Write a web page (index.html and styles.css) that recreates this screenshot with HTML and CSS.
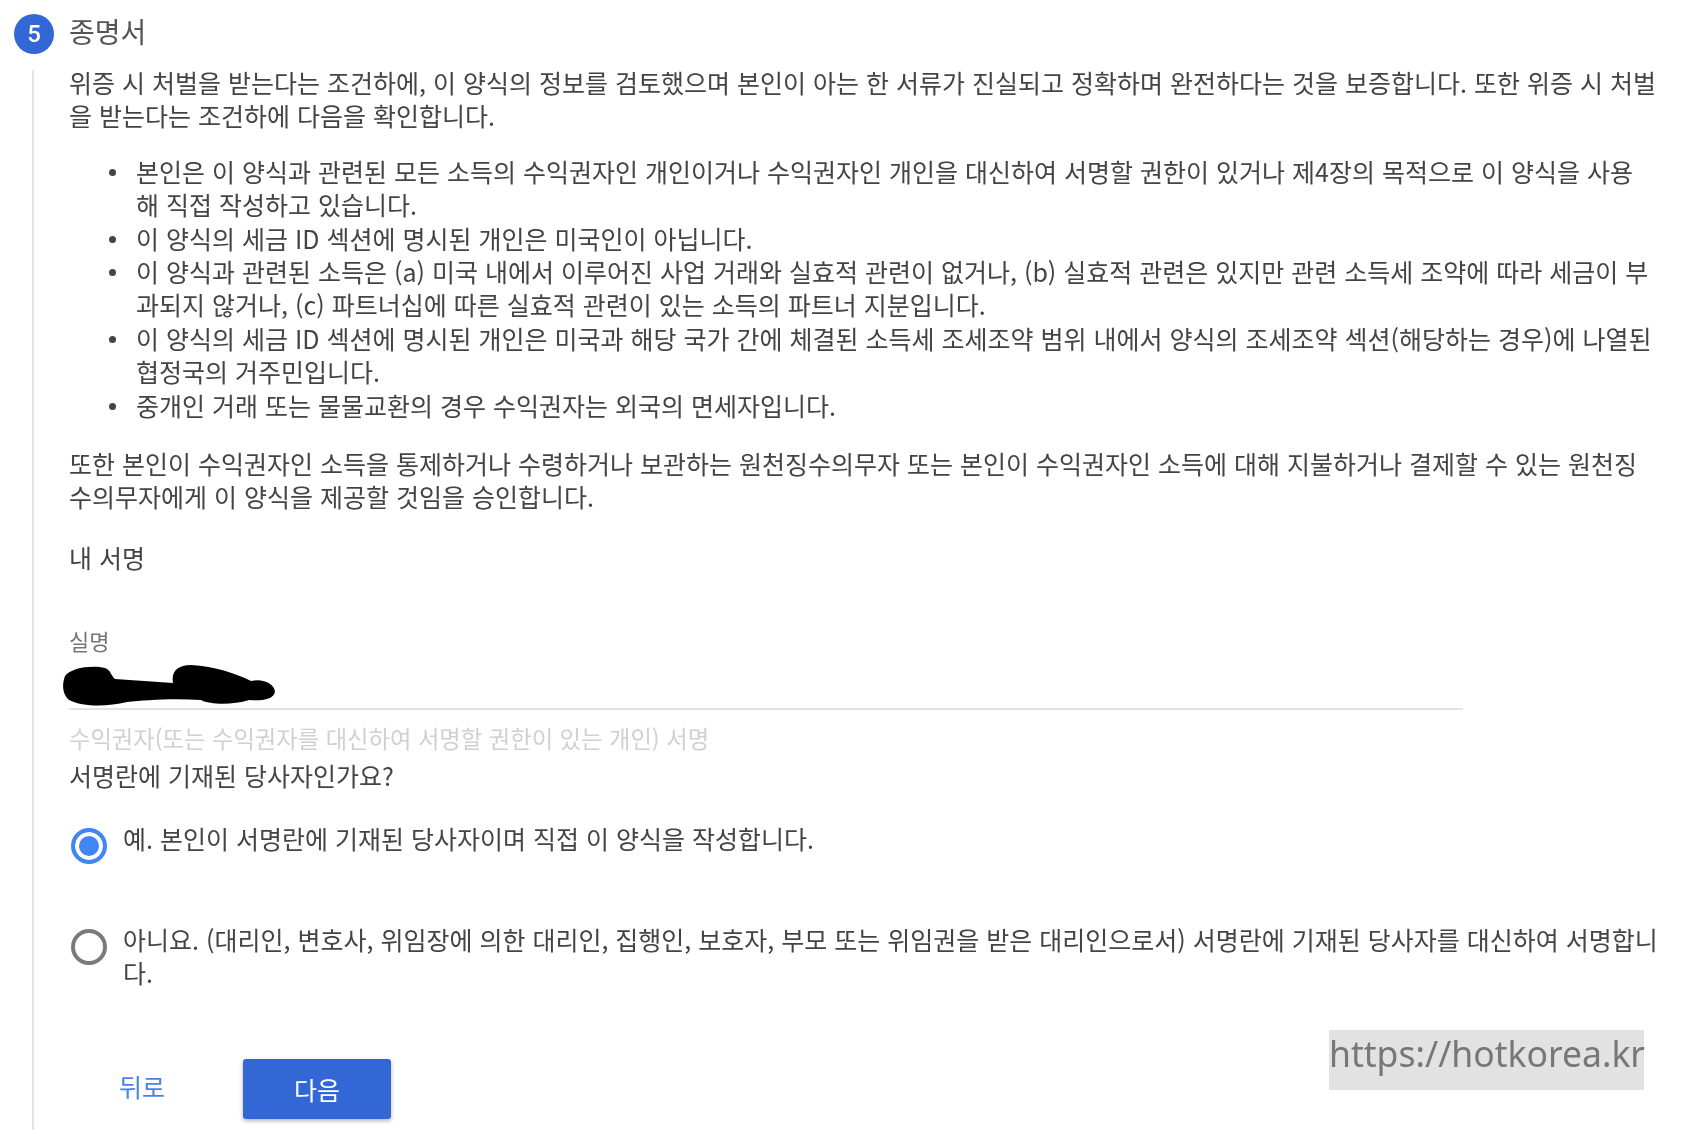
FILE: index.html
```html
<!DOCTYPE html>
<html lang="ko">
<head>
    <meta charset="UTF-8">
    <meta name="viewport" content="width=device-width, initial-scale=1.0">
    <title>종명서</title>
    <link rel="stylesheet" href="styles.css">
</head>
<body>

<div class="step-header">
    <div class="step-number">5</div>
    <div class="step-title">종명서</div>
</div>

<div class="step-body">
    <p class="intro">위증 시 처벌을 받는다는 조건하에, 이 양식의 정보를 검토했으며 본인이 아는 한 서류가 진실되고 정확하며 완전하다는 것을 보증합니다. 또한 위증 시 처벌을 받는다는 조건하에 다음을 확인합니다.</p>

    <ul class="terms">
        <li>본인은 이 양식과 관련된 모든 소득의 수익권자인 개인이거나 수익권자인 개인을 대신하여 서명할 권한이 있거나 제4장의 목적으로 이 양식을 사용해 직접 작성하고 있습니다.</li>
        <li>이 양식의 세금 ID 섹션에 명시된 개인은 미국인이 아닙니다.</li>
        <li>이 양식과 관련된 소득은 (a) 미국 내에서 이루어진 사업 거래와 실효적 관련이 없거나, (b) 실효적 관련은 있지만 관련 소득세 조약에 따라 세금이 부과되지 않거나, (c) 파트너십에 따른 실효적 관련이 있는 소득의 파트너 지분입니다.</li>
        <li>이 양식의 세금 ID 섹션에 명시된 개인은 미국과 해당 국가 간에 체결된 소득세 조세조약 범위 내에서 양식의 조세조약 섹션(해당하는 경우)에 나열된 협정국의 거주민입니다.</li>
        <li>중개인 거래 또는 물물교환의 경우 수익권자는 외국의 면세자입니다.</li>
    </ul>

    <p class="consent">또한 본인이 수익권자인 소득을 통제하거나 수령하거나 보관하는 원천징수의무자 또는 본인이 수익권자인 소득에 대해 지불하거나 결제할 수 있는 원천징수의무자에게 이 양식을 제공할 것임을 승인합니다.</p>

    <div class="sign-title">내 서명</div>

    <div class="name-field">
        <label class="field-label">실명</label>
        <div class="field-input">
            <svg class="scribble" width="216" height="42" viewBox="0 0 216 42">
                <path d="M4 12 C10 4 30 1 44 4 C50 6 50 12 54 15 L112 19 C110 8 116 1 130 1 C154 2 176 10 190 17 C202 14 214 20 214 28 C212 36 200 37 188 36 C172 41 150 41 140 36 C112 34 84 36 66 38 C46 43 22 43 8 36 C1 30 1 20 4 12 Z" fill="#000"/>
            </svg>
        </div>
        <div class="field-hint">수익권자(또는 수익권자를 대신하여 서명할 권한이 있는 개인) 서명</div>
    </div>

    <div class="question">서명란에 기재된 당사자인가요?</div>

    <div class="radio-row radio-first">
        <span class="radio radio-on"></span>
        <span class="radio-text">예. 본인이 서명란에 기재된 당사자이며 직접 이 양식을 작성합니다.</span>
    </div>
    <div class="radio-row radio-second">
        <span class="radio"></span>
        <span class="radio-text">아니요. (대리인, 변호사, 위임장에 의한 대리인, 집행인, 보호자, 부모 또는 위임권을 받은 대리인으로서) 서명란에 기재된 당사자를 대신하여 서명합니다.</span>
    </div>

    <div class="actions">
        <a class="back-link">뒤로</a>
        <button class="next-btn">다음</button>
    </div>
</div>

<div class="watermark">https://hotkorea.kr</div>

</body>
</html>
```

FILE: styles.css
```css
/* Base */
html, body {
    height: 1130px;
}

body {
    margin: 0;
    overflow: hidden;
    position: relative;
    background-color: #fff;
    color: #444;
    font-family: "Noto Sans CJK KR", "Noto Sans", sans-serif;
    font-size: 25px;
    line-height: 33.4px;
    filter: blur(0.4px);
}

/* Step header */
.step-header {
    display: flex;
    align-items: center;
    gap: 15px;
    padding: 13px 0 0 14px;
    height: 41px;
}

.step-number {
    width: 40px;
    height: 40px;
    border-radius: 50%;
    background-color: #3367d6;
    color: #fff;
    font-family: "Roboto", sans-serif;
    font-size: 24px;
    font-weight: 500;
    line-height: 40px;
    text-align: center;
}

.step-title {
    font-size: 28px;
    color: #555;
    margin-top: -4px;
}

/* Step body with the rail on the left */
.step-body {
    display: flow-root;
    margin: 16px 0 0 32px;
    padding-left: 35px;
    width: 1593px;
    height: 1060px;
    border-left: 2px solid #e4e4e4;
}

.intro {
    margin: -4px 0 0;
}

.terms {
    margin: 22px 0 0;
    padding: 0 9px 0 67px;
    list-style: none;
}

.terms li {
    position: relative;
}

.terms li::before {
    content: "";
    position: absolute;
    left: -27px;
    top: 14px;
    width: 7px;
    height: 7px;
    border-radius: 50%;
    background-color: #444;
}

.consent {
    margin: 25px 6px 0 0;
}

.sign-title {
    margin-top: 27px;
}

/* Name field */
.name-field {
    margin-top: 50px;
}

.field-label {
    display: block;
    font-size: 22px;
    color: #777;
}

.field-input {
    width: 1394px;
    height: 50px;
    border-bottom: 2px solid #e2e2e2;
    position: relative;
}

.scribble {
    position: absolute;
    left: -8px;
    top: 6px;
}

.field-hint {
    margin-top: 12px;
    font-size: 23.3px;
    color: #d0d0d0;
}

.question {
    margin-top: 4px;
    color: #444;
}

/* Radios */
.radio-row {
    display: flex;
    gap: 16px;
    margin-left: 2px;
}

.radio-first {
    margin-top: 29px;
    height: 64px;
}

.radio-second {
    margin-top: 37px;
    height: 67px;
}

.radio {
    flex: none;
    box-sizing: border-box;
    width: 36px;
    height: 36px;
    margin-top: 6px;
    border: 4px solid #7a7a7a;
    border-radius: 50%;
    background-color: #fff;
}

.radio-on {
    border-color: #4285f4;
    background-color: #4285f4;
    box-shadow: inset 0 0 0 4px #fff;
}

/* Bottom buttons */
.actions {
    display: flex;
    align-items: center;
    gap: 78px;
    margin-top: 69px;
    padding-left: 50px;
}

.back-link {
    color: #4a80e8;
    font-size: 25px;
    padding-bottom: 4px;
}

.next-btn {
    width: 148px;
    height: 60px;
    border: none;
    border-radius: 3px;
    background-color: #3367d6;
    color: #fff;
    font-family: inherit;
    font-size: 25px;
    box-shadow: 0 2px 4px rgba(0, 0, 0, 0.3);
}

/* Watermark over the page corner */
.watermark {
    position: absolute;
    left: 1329px;
    top: 1030px;
    width: 315px;
    height: 60px;
    background-color: #e2e2e2;
    color: #777;
    font-family: "Noto Sans", sans-serif;
    font-size: 35.5px;
    line-height: 46px;
    text-align: center;
    white-space: nowrap;
}
```
